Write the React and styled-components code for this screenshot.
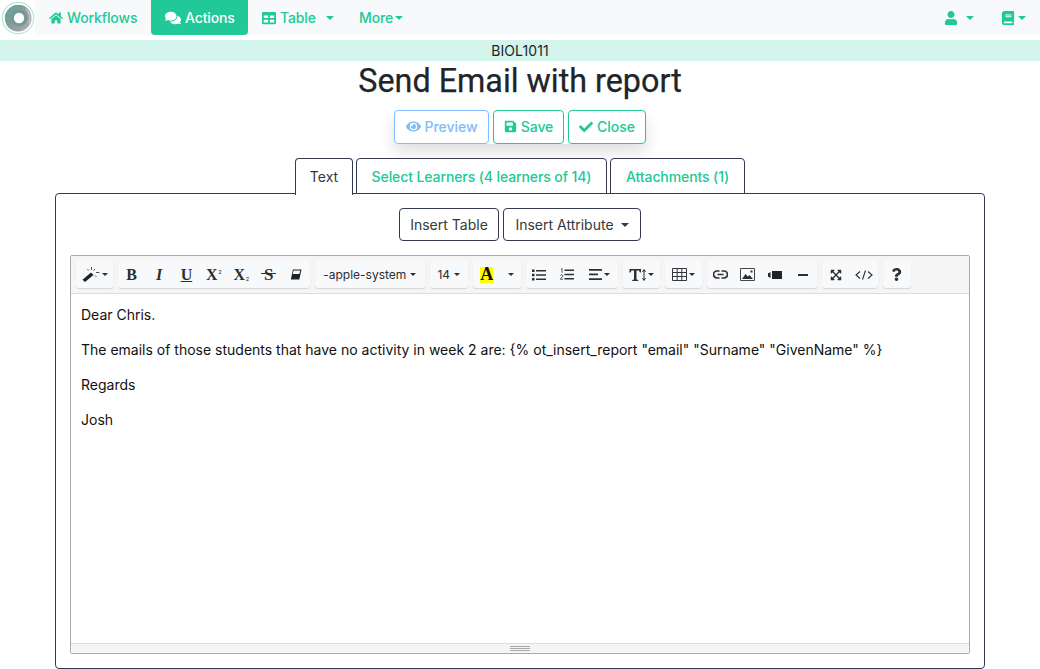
import React from "react";
import styled, { createGlobalStyle } from "styled-components";
import {
  FaHome, FaComments, FaTable, FaUser, FaBook, FaEye, FaSave, FaCheck, FaExpandArrowsAlt, FaQuestion,
} from "react-icons/fa";

const GREEN = "#20c997";
const NAVY = "#343a52";
const INK = "#2c2f33";
const FONT = 'Inter, "Liberation Sans", sans-serif';
const SERIF = '"Liberation Serif", serif';

const Global = createGlobalStyle`
  html, body { margin: 0; padding: 0; background: #fff; overflow: hidden; }
  body { font-family: ${FONT}; color: #212529; width: 1040px; height: 669px; }
  * { box-sizing: border-box; }
`;

const Nav = styled.nav`
  display: flex; align-items: stretch; height: 35px; background: #f8f9fa; font-size: 14px; font-weight: 500; letter-spacing: -.12px;
`;
const LogoBox = styled.div`
  width: 35px; background: #fff; display: flex; align-items: center; justify-content: center;
`;
const NavItem = styled.div`
  display: flex; align-items: center; gap: ${p => p.$gap ?? 4}px; color: ${p => (p.$active ? "#fff" : GREEN)};
  background: ${p => (p.$active ? GREEN : "transparent")};
  border-radius: ${p => (p.$active ? "0 0 4px 4px" : 0)};
  width: ${p => p.$w}px; padding-left: ${p => p.$pl || 0}px; white-space: nowrap;
`;
const Spacer = styled.div`flex: 1;`;
const Caret = styled.span`
  display: inline-block; flex: none; width: 0; height: 0; margin-left: ${p => p.$ml ?? 0}px;
  border-top: 4px solid currentColor;
  border-left: 4px solid transparent; border-right: 4px solid transparent;
`;
const MiniCaret = styled(Caret)`border-top-width: 3px; border-left-width: 3px; border-right-width: 3px;`;
const Band = styled.div`
  margin-top: 5px; height: 21px; background: #d2f4ea; text-align: center; font-size: 14px; line-height: 21px; letter-spacing: .1px;
`;
const Title = styled.h1`
  margin: 0; height: 49px; font-size: 32.3px; font-weight: 400; text-align: center; line-height: 40px;
  font-family: Roboto, ${FONT}; -webkit-text-stroke: .25px #212529;
`;
const Actions = styled.div`display: flex; justify-content: center;`;
const ActionGroup = styled.div`
  display: flex; gap: 4px; box-shadow: 0 8px 16px rgba(0,0,0,.13); border-radius: 4px;
`;
const ActionBtn = styled.div`
  height: 34px; width: ${p => p.$w}px; display: flex; align-items: center; justify-content: center; gap: 4px;
  background: #fff; border: 1px solid ${p => (p.$muted ? "#7fbfff" : GREEN)}; padding-bottom: 1px;
  color: ${p => (p.$muted ? "#7fbcf8" : GREEN)}; border-radius: 4px; font-size: 14px; font-weight: 500; letter-spacing: -.05px;
`;
const Tabs = styled.div`
  display: flex; gap: 3px; margin: 14px 55px 0; padding-left: 240px; height: 35px; align-items: flex-start;
`;
const Tab = styled.div`
  height: ${p => (p.$active ? 37 : 36)}px; width: ${p => p.$w}px; display: flex; justify-content: center; align-items: flex-start;
  padding-top: 9px; line-height: 18px;
  border: 1px solid ${NAVY}; border-bottom: ${p => (p.$active ? "none" : `1px solid ${NAVY}`)};
  border-radius: 4px 4px 0 0; background: #fff; position: relative; z-index: 1;
  color: ${p => (p.$active ? "#343a40" : GREEN)}; font-size: 14px; font-weight: ${p => (p.$active ? 400 : 500)}; letter-spacing: ${p => (p.$active ? 0 : "-.1px")};
`;
const Card = styled.section`
  margin: 0 55px; height: 476px; border: 1px solid ${NAVY}; border-radius: 4px;
  padding: 14px 14px 0; background: #fff;
`;
const InsertRow = styled.div`display: flex; justify-content: center; gap: 4px;`;
const InsertBtn = styled.div`
  height: 33px; width: ${p => p.$w}px; display: flex; align-items: center; justify-content: center; gap: 7px;
  border: 1px solid ${NAVY}; border-radius: 4px; color: #343a40; font-size: 14px;
`;
const Editor = styled.div`
  margin-top: 14px; height: 399px; border: 1px solid #a9a9a9; border-radius: 2px; display: flex; flex-direction: column;
`;
const Toolbar = styled.div`
  height: 38px; flex: none; background: #f5f5f5; border-bottom: 1px solid #ddd;
  display: flex; gap: 5px; padding: 5px 0 0 5px;
`;
const ToolGroup = styled.div`
  height: 27px; display: flex; align-items: center; background: #f8f9fa; border-radius: 3px;
  box-shadow: 0 1px 1px rgba(0,0,0,.13);
`;
const Tool = styled.div`
  width: ${p => p.$w}px; height: 27px; flex: none; display: flex; align-items: center; justify-content: center;
  gap: ${p => p.$gap ?? 2}px; color: ${INK}; font-size: 12px;
`;
const Marker = styled.span`
  width: 13px; height: 16px; background: #ffff00; display: flex; align-items: center; justify-content: center;
  font-family: ${SERIF}; font-weight: 700; font-size: 18px; color: #111;
`;
const Glyph = styled.span`
  display: inline-flex; align-items: baseline; font-family: ${SERIF}; font-weight: 700; font-size: 16px; line-height: 1;
  font-style: ${p => (p.$italic ? "italic" : "normal")};
  text-decoration: ${p => p.$line || "none"};
  text-decoration-thickness: 1px;
  text-underline-offset: 1px;
`;
const Struck = styled(Glyph)`
  position: relative; font-size: 17px;
  &::after { content: ""; position: absolute; left: -3px; right: -3px; top: 7px; height: 1px; background: ${INK}; }
`;
const Tiny = styled.span`
  font-size: 5px; font-family: ${FONT}; font-weight: 500; transform: translateY(${p => (p.$up ? -6 : 1)}px); margin-left: 1px;
`;
const Body = styled.div`
  flex: 1; padding: 11px 10px 0; font-size: 14px; line-height: 20px; color: #111;
`;
const Para = styled.p`margin: 0 0 15px; white-space: nowrap;`;
const Statusbar = styled.div`
  height: 10px; flex: none; background: #f5f5f5; border-top: 1px solid #ddd;
  display: flex; flex-direction: column; align-items: center; justify-content: center; gap: 1px;
`;
const Grip = styled.i`display: block; width: 20px; height: 1px; background: #a9a9a9;`;

const Logo = () => (
  <svg width="34" height="34" viewBox="0 0 34 34" aria-hidden="true">
    <defs>
      <linearGradient id="disc" x1="0" y1="0" x2="1" y2="0.6">
        <stop offset="0" stopColor="#55a89c" />
        <stop offset=".55" stopColor="#8f9a9b" />
        <stop offset="1" stopColor="#a8a8aa" />
      </linearGradient>
    </defs>
    <circle cx="17" cy="17" r="15.700" fill="#fff" stroke="#a8ebdb" strokeWidth="1.200" />
    <circle cx="17" cy="17" r="13.500" fill="url(#disc)" />
    <path d="M5 24A14 14 0 0 1 20 3.500" fill="none" stroke="#fff" strokeWidth="1.100" />
    <path d="M25 8a12 12 0 0 1 3 14" fill="none" stroke="#d8d8d8" strokeWidth="1" />
    <circle cx="18" cy="17" r="8.500" fill="#6f9a98" />
    <circle cx="18" cy="17" r="5.200" fill="#fff" />
  </svg>
);
const Wand = () => (
  <svg width="18" height="15" viewBox="0 0 18 15" aria-hidden="true">
    <path d="M.5 12.800 9 5.500l2.500 2.500L3 15z" fill="#1f2226" />
    <path d="M9.500 0v3M14 5.500h3.500M13 2l-1.500 1.500M13 8.500l1.500 1.500M5.500 2l1 1.500" stroke="#555" fill="none" />
  </svg>
);
const Eraser = () => (
  <svg width="12" height="11" viewBox="0 0 12 11" aria-hidden="true">
    <path d="M3 .500h8.500L9.300 10.500H.800z" fill="#1f2226" />
    <path d="M3.600 1.600h6.600l-.8 3.400H2.800z" fill="#f8f9fa" />
  </svg>
);
const BulletList = () => (
  <svg width="14" height="12" viewBox="0 0 14 12" aria-hidden="true">
    <path d="M0 .5h2.500V3H0zM0 4.800h2.500v2.500H0zM0 9h2.500v2.500H0zM4 1h10v1.600H4zM4 5.200h10v1.600H4zM4 9.400h10v1.600H4z" fill={INK} />
  </svg>
);
const NumberList = () => (
  <svg width="14" height="13" viewBox="0 0 14 13" aria-hidden="true">
    <path d="M4.500 1.500h9.500v1.600H4.500zM4.500 5.700h9.500v1.600H4.500zM4.500 9.900h9.500v1.600H4.500z" fill={INK} />
    <path d="M1 1.200 2 .5v4.300M.3 7.500c.5-1 2.600-1 2.600.2 0 1-1.700 1.800-2.600 3.500h2.800" fill="none" stroke={INK} strokeWidth=".8" />
  </svg>
);
const AlignIcon = () => (
  <svg width="13" height="11" viewBox="0 0 13 11" aria-hidden="true">
    <path d="M0 0h13v1.700H0zM0 4.600h9v1.700H0zM0 9.200h13v1.700H0z" fill={INK} />
  </svg>
);
const TextHeight = () => (
  <svg width="18" height="14" viewBox="0 0 18 14" aria-hidden="true">
    <path d="M.5 1h11.500v3.500h-1L10 2.500H7.500v9l1.800.5v1H3.200v-1l1.800-.5v-9H2.500l-1 2h-1z" fill={INK} />
    <path d="M15 2v10M13.500 4 15 1.500 16.500 4M13.500 10l1.500 2.500 1.500-2.500" fill="none" stroke={INK} />
  </svg>
);
const GridIcon = () => (
  <svg width="15" height="13" viewBox="0 0 15 13" aria-hidden="true">
    <path d="M.5.500h14v12H.5zM.5 4.500h14M.5 8.500h14M5.200.500v12M9.800.500v12" fill="none" stroke="#33373b" />
  </svg>
);
const LinkIcon = () => (
  <svg width="15" height="9" viewBox="0 0 15 9" aria-hidden="true">
    <path d="M6.500 1H4a3.500 3.500 0 0 0 0 7h2.500M8.500 1H11a3.500 3.500 0 0 1 0 7H8.500M4.500 4.500h6" fill="none" stroke={INK} strokeWidth="1.700" />
  </svg>
);
const ImageIcon = () => (
  <svg width="15" height="13" viewBox="0 0 15 13" aria-hidden="true">
    <path d="M.5.500h14v12H.5z" fill="none" stroke="#44484c" />
    <path d="M2 11 5.500 6l2.300 2.500L9.500 7l3.500 4z" fill={INK} />
    <rect x="10.500" y="2.500" width="2" height="2" fill={INK} />
  </svg>
);
const VideoIcon = () => (
  <svg width="14" height="8" viewBox="0 0 14 8" aria-hidden="true">
    <path d="M0 2.500 2.500 1v6L0 5.500zM4 0H14v8H4z" fill="#1f2226" />
  </svg>
);
const RuleIcon = () => (
  <svg width="10" height="2" viewBox="0 0 10 2" aria-hidden="true"><rect width="10" height="2" fill={INK} /></svg>
);
const CodeIcon = () => (
  <svg width="18" height="10" viewBox="0 0 18 10" aria-hidden="true">
    <path d="M5 1.500 1 5l4 3.500M13 1.500 17 5l-4 3.500M10.500 .5l-3 9" fill="none" stroke={INK} strokeWidth="1.100" />
  </svg>
);

export default function App() {
  return (
    <>
      <Global />
      <Nav>
        <LogoBox><Logo /></LogoBox>
        <NavItem $w={116} $pl={14}><FaHome size={14} />Workflows</NavItem>
        <NavItem $active $w={97} $pl={14}><FaComments size={16} />Actions</NavItem>
        <NavItem $w={97} $pl={14}><FaTable size={14} />Table<Caret $ml={6} /></NavItem>
        <NavItem $w={80} $pl={14} $gap={2}>More<Caret /></NavItem>
        <Spacer />
        <NavItem $w={57} $gap={8}><FaUser size={14} /><Caret /></NavItem>
        <NavItem $w={39} $gap={3}><FaBook size={14} /><Caret /></NavItem>
      </Nav>
      <Band>BIOL1011</Band>
      <Title>Send Email with report</Title>
      <Actions>
        <ActionGroup>
          <ActionBtn $muted $w={95}><FaEye size={15} />Preview</ActionBtn>
          <ActionBtn $w={71}><FaSave size={13} />Save</ActionBtn>
          <ActionBtn $w={78}><FaCheck size={14} />Close</ActionBtn>
        </ActionGroup>
      </Actions>
      <Tabs>
        <Tab $active $w={58}>Text</Tab>
        <Tab $w={251}>Select Learners (4 learners of 14)</Tab>
        <Tab $w={135}>Attachments (1)</Tab>
      </Tabs>
      <Card>
        <InsertRow>
          <InsertBtn $w={100}>Insert Table</InsertBtn>
          <InsertBtn $w={138}>Insert Attribute<Caret /></InsertBtn>
        </InsertRow>
        <Editor>
          <Toolbar>
            <ToolGroup><Tool $w={37}><Wand /><MiniCaret /></Tool></ToolGroup>
            <ToolGroup>
              <Tool $w={27.400}><Glyph>B</Glyph></Tool>
              <Tool $w={27.400}><Glyph $italic>I</Glyph></Tool>
              <Tool $w={27.400}><Glyph $line="underline">U</Glyph></Tool>
              <Tool $w={27.400}><Glyph>X<Tiny $up>2</Tiny></Glyph></Tool>
              <Tool $w={27.400}><Glyph>X<Tiny>2</Tiny></Glyph></Tool>
              <Tool $w={27.400}><Struck>S</Struck></Tool>
              <Tool $w={27.400}><Eraser /></Tool>
            </ToolGroup>
            <ToolGroup><Tool $w={110} $gap={4}>-apple-system<MiniCaret /></Tool></ToolGroup>
            <ToolGroup><Tool $w={38} $gap={4}>14<MiniCaret /></Tool></ToolGroup>
            <ToolGroup>
              <Tool $w={28}><Marker>A</Marker></Tool>
              <Tool $w={20}><MiniCaret /></Tool>
            </ToolGroup>
            <ToolGroup>
              <Tool $w={27.400}><BulletList /></Tool>
              <Tool $w={27.400}><NumberList /></Tool>
              <Tool $w={37}><AlignIcon /><MiniCaret /></Tool>
            </ToolGroup>
            <ToolGroup><Tool $w={37} $gap={1}><TextHeight /><MiniCaret /></Tool></ToolGroup>
            <ToolGroup><Tool $w={37}><GridIcon /><MiniCaret /></Tool></ToolGroup>
            <ToolGroup>
              <Tool $w={27.500}><LinkIcon /></Tool>
              <Tool $w={27.500}><ImageIcon /></Tool>
              <Tool $w={27.500}><VideoIcon /></Tool>
              <Tool $w={27.500}><RuleIcon /></Tool>
            </ToolGroup>
            <ToolGroup>
              <Tool $w={28}><FaExpandArrowsAlt size={12} /></Tool>
              <Tool $w={28}><CodeIcon /></Tool>
            </ToolGroup>
            <ToolGroup><Tool $w={28}><FaQuestion size={13} /></Tool></ToolGroup>
          </Toolbar>
          <Body>
            <Para>Dear Chris.</Para>
            <Para>The emails of those students that have no activity in week 2 are: {'{% ot_insert_report "email" "Surname" "GivenName" %}'}</Para>
            <Para>Regards</Para>
            <Para>Josh</Para>
          </Body>
          <Statusbar><Grip /><Grip /><Grip /></Statusbar>
        </Editor>
      </Card>
    </>
  );
}
